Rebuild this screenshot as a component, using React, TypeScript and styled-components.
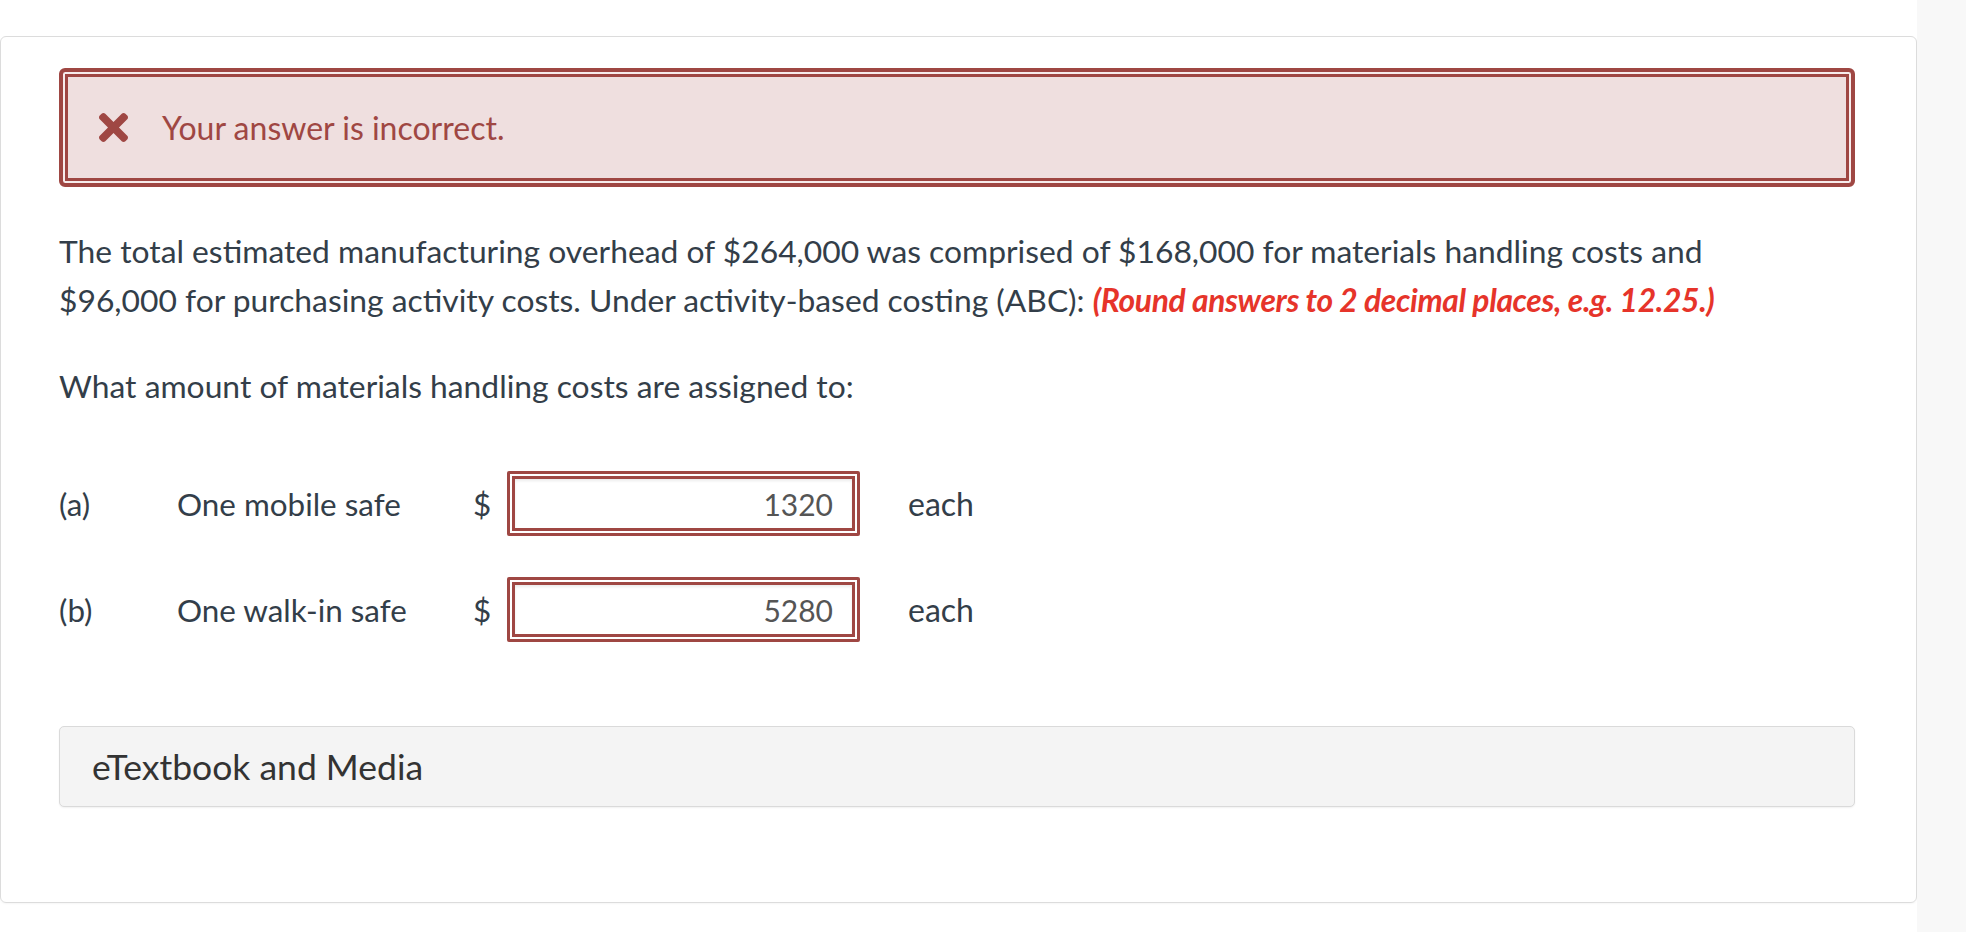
import { FC } from 'react'
import styled, { createGlobalStyle } from 'styled-components'

const GlobalStyle = createGlobalStyle`
  html, body {
    margin: 0;
    padding: 0;
    background: #ffffff;
  }
  body {
    font-family: Lato, 'Open Sans', sans-serif;
    color: #333e49;
  }
`

const Page = styled.div`
  display: flex;
  min-height: 932px;
  width: 1966px;
`

const Main = styled.main`
  flex: 0 0 1917px;
  padding-top: 36px;
  box-sizing: border-box;
  background: #ffffff;
`

const SideStrip = styled.aside`
  flex: 1;
  background: #f8f8f8;
`

const Card = styled.section`
  box-sizing: border-box;
  height: 867px;
  border: 1px solid #dcdcdc;
  border-radius: 6px;
  padding: 31px 61px 0 58px;
  box-shadow: 0 1px 2px rgba(0, 0, 0, 0.04);
`

const Alert = styled.div`
  box-sizing: border-box;
  height: 119px;
  display: flex;
  align-items: center;
  gap: 34px;
  padding-left: 36px;
  background: #efdfdf;
  border: 4px solid #9f4743;
  border-radius: 6px;
  box-shadow: inset 0 0 0 2px #f7ecec, inset 0 0 0 5px #9f4743;
  color: #9f4743;
  font-size: 32px;
`

const CrossIcon = styled.svg`
  width: 29px;
  height: 29px;
  flex: 0 0 auto;
  fill: #9f4743;
`

const Paragraph = styled.p<{ $top: number }>`
  margin: ${({ $top }) => $top}px 0 0;
  font-size: 31.8px;
  line-height: 49px;
`

const Hint = styled.span`
  color: #e6342a;
  font-weight: 700;
  font-style: italic;
  letter-spacing: -0.35px;
`

const Answers = styled.div`
  margin-top: 60px;
  display: flex;
  flex-direction: column;
  gap: 41px;
`

const Row = styled.div`
  display: grid;
  grid-template-columns: 118px 296px 34px 353px auto;
  align-items: center;
  font-size: 31.4px;
`

const Dollar = styled.span``

const AnswerBox = styled.div`
  box-sizing: border-box;
  height: 65px;
  border: 8px double #9f4743;
  border-radius: 2px;
  background: #ffffff;
  box-shadow: inset 0 2px 3px rgba(0, 0, 0, 0.08);
  display: flex;
  align-items: center;
  justify-content: flex-end;
  padding-right: 19px;
  color: #555555;
  font-size: 30px;
`

const Unit = styled.span`
  margin-left: 48px;
  font-size: 32px;
`

const MediaBar = styled.div`
  box-sizing: border-box;
  margin-top: 84px;
  height: 81px;
  display: flex;
  align-items: center;
  padding-left: 32px;
  background: #f4f4f4;
  border: 1px solid #dadada;
  border-radius: 5px;
  box-shadow: 0 1px 2px rgba(0, 0, 0, 0.06);
  color: #333333;
  font-size: 35.5px;
`

const answers = [
  { label: '(a)', name: 'One mobile safe', value: '1320' },
  { label: '(b)', name: 'One walk-in safe', value: '5280' },
]

const App: FC = () => {
  return (
    <Page>
      <GlobalStyle />
      <Main>
        <Card>
          <Alert>
            <CrossIcon viewBox="0 80 352 352">
              <path d="M242.72 256l100.07-100.07c12.28-12.28 12.28-32.19 0-44.48l-22.240-22.24c-12.28-12.28-32.19-12.28-44.48 0L176 189.28 75.93 89.21c-12.28-12.28-32.19-12.28-44.48 0L9.21 111.45c-12.28 12.28-12.28 32.19 0 44.48L109.28 256 9.21 356.07c-12.28 12.28-12.28 32.19 0 44.48l22.24 22.24c12.28 12.28 32.2 12.28 44.48 0L176 322.72l100.07 100.07c12.28 12.28 32.2 12.28 44.48 0l22.24-22.24c12.28-12.28 12.28-32.19 0-44.48L242.72 256z" />
            </CrossIcon>
            <span>Your answer is incorrect.</span>
          </Alert>

          <Paragraph $top={40}>
            The total estimated manufacturing overhead of $264,000 was comprised of $168,000 for materials handling costs and
            <br />
            $96,000 for purchasing activity costs. Under activity-based costing (ABC):{' '}
            <Hint>(Round answers to 2 decimal places, e.g. 12.25.)</Hint>
          </Paragraph>

          <Paragraph $top={37}>What amount of materials handling costs are assigned to:</Paragraph>

          <Answers>
            {answers.map((a) => (
              <Row key={a.label}>
                <span>{a.label}</span>
                <span>{a.name}</span>
                <Dollar>$</Dollar>
                <AnswerBox>{a.value}</AnswerBox>
                <Unit>each</Unit>
              </Row>
            ))}
          </Answers>

          <MediaBar>eTextbook and Media</MediaBar>
        </Card>
      </Main>
      <SideStrip />
    </Page>
  )
}

export default App
